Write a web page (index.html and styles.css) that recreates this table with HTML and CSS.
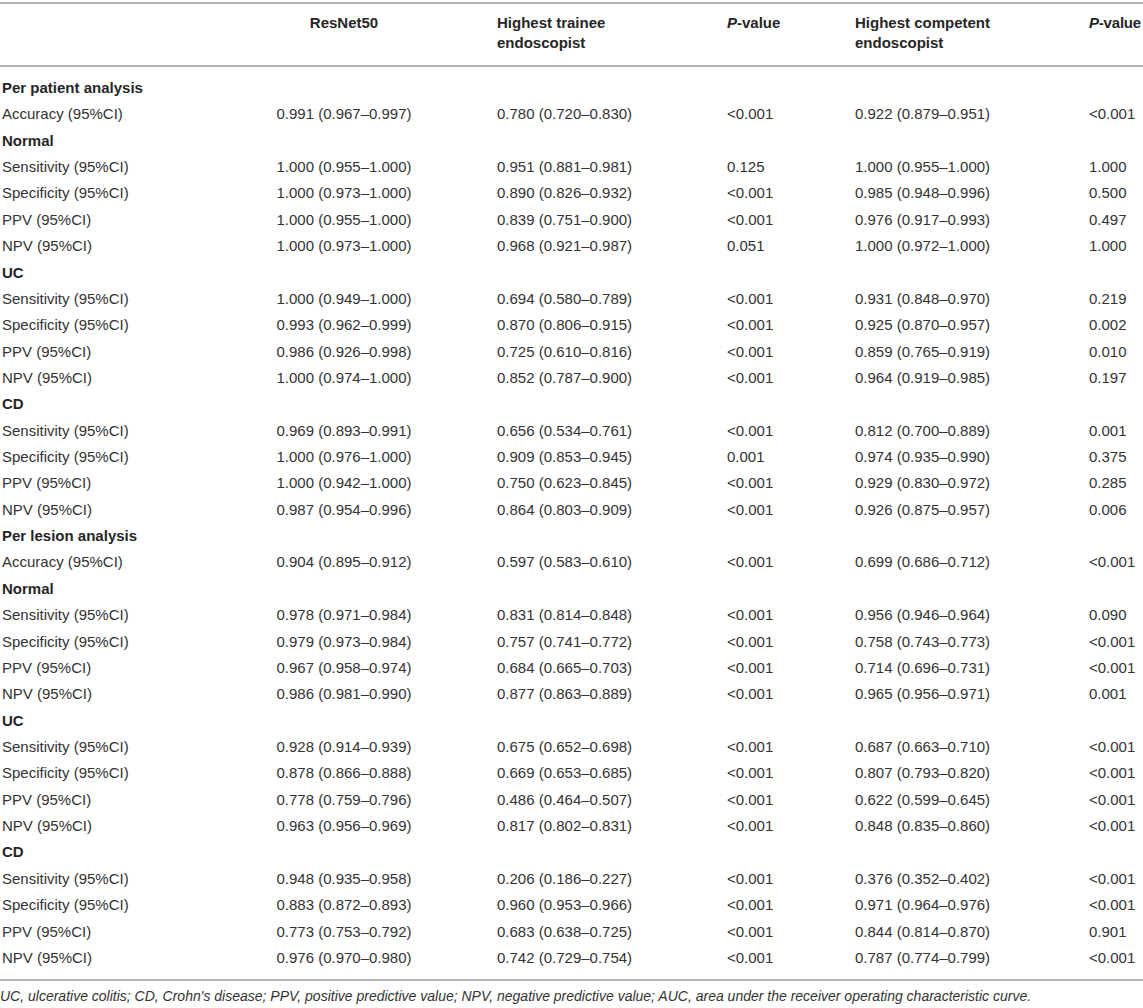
FILE: index.html
```html
<!DOCTYPE html>
<html>
<head>
<meta charset="utf-8">
<link rel="stylesheet" href="styles.css">
</head>
<body>
<div class="wrap">
<table class="tbl">
<colgroup>
<col class="c1"><col class="c2"><col class="c3"><col class="c4"><col class="c5"><col class="c6">
</colgroup>
<thead>
<tr>
<th></th>
<th class="ctr">ResNet50</th>
<th class="pl">Highest trainee<br>endoscopist</th>
<th><i>P</i>-value</th>
<th>Highest competent<br>endoscopist</th>
<th><i>P</i>-value</th>
</tr>
</thead>
<tbody>
<tr class="sec"><td>Per patient analysis</td><td></td><td></td><td></td><td></td><td></td></tr>
<tr><td>Accuracy (95%CI)</td><td class="ctr">0.991 (0.967–0.997)</td><td class="pl">0.780 (0.720–0.830)</td><td>&lt;0.001</td><td>0.922 (0.879–0.951)</td><td>&lt;0.001</td></tr>
<tr class="sec"><td>Normal</td><td></td><td></td><td></td><td></td><td></td></tr>
<tr><td>Sensitivity (95%CI)</td><td class="ctr">1.000 (0.955–1.000)</td><td class="pl">0.951 (0.881–0.981)</td><td>0.125</td><td>1.000 (0.955–1.000)</td><td>1.000</td></tr>
<tr><td>Specificity (95%CI)</td><td class="ctr">1.000 (0.973–1.000)</td><td class="pl">0.890 (0.826–0.932)</td><td>&lt;0.001</td><td>0.985 (0.948–0.996)</td><td>0.500</td></tr>
<tr><td>PPV (95%CI)</td><td class="ctr">1.000 (0.955–1.000)</td><td class="pl">0.839 (0.751–0.900)</td><td>&lt;0.001</td><td>0.976 (0.917–0.993)</td><td>0.497</td></tr>
<tr><td>NPV (95%CI)</td><td class="ctr">1.000 (0.973–1.000)</td><td class="pl">0.968 (0.921–0.987)</td><td>0.051</td><td>1.000 (0.972–1.000)</td><td>1.000</td></tr>
<tr class="sec"><td>UC</td><td></td><td></td><td></td><td></td><td></td></tr>
<tr><td>Sensitivity (95%CI)</td><td class="ctr">1.000 (0.949–1.000)</td><td class="pl">0.694 (0.580–0.789)</td><td>&lt;0.001</td><td>0.931 (0.848–0.970)</td><td>0.219</td></tr>
<tr><td>Specificity (95%CI)</td><td class="ctr">0.993 (0.962–0.999)</td><td class="pl">0.870 (0.806–0.915)</td><td>&lt;0.001</td><td>0.925 (0.870–0.957)</td><td>0.002</td></tr>
<tr><td>PPV (95%CI)</td><td class="ctr">0.986 (0.926–0.998)</td><td class="pl">0.725 (0.610–0.816)</td><td>&lt;0.001</td><td>0.859 (0.765–0.919)</td><td>0.010</td></tr>
<tr><td>NPV (95%CI)</td><td class="ctr">1.000 (0.974–1.000)</td><td class="pl">0.852 (0.787–0.900)</td><td>&lt;0.001</td><td>0.964 (0.919–0.985)</td><td>0.197</td></tr>
<tr class="sec"><td>CD</td><td></td><td></td><td></td><td></td><td></td></tr>
<tr><td>Sensitivity (95%CI)</td><td class="ctr">0.969 (0.893–0.991)</td><td class="pl">0.656 (0.534–0.761)</td><td>&lt;0.001</td><td>0.812 (0.700–0.889)</td><td>0.001</td></tr>
<tr><td>Specificity (95%CI)</td><td class="ctr">1.000 (0.976–1.000)</td><td class="pl">0.909 (0.853–0.945)</td><td>0.001</td><td>0.974 (0.935–0.990)</td><td>0.375</td></tr>
<tr><td>PPV (95%CI)</td><td class="ctr">1.000 (0.942–1.000)</td><td class="pl">0.750 (0.623–0.845)</td><td>&lt;0.001</td><td>0.929 (0.830–0.972)</td><td>0.285</td></tr>
<tr><td>NPV (95%CI)</td><td class="ctr">0.987 (0.954–0.996)</td><td class="pl">0.864 (0.803–0.909)</td><td>&lt;0.001</td><td>0.926 (0.875–0.957)</td><td>0.006</td></tr>
<tr class="sec"><td>Per lesion analysis</td><td></td><td></td><td></td><td></td><td></td></tr>
<tr><td>Accuracy (95%CI)</td><td class="ctr">0.904 (0.895–0.912)</td><td class="pl">0.597 (0.583–0.610)</td><td>&lt;0.001</td><td>0.699 (0.686–0.712)</td><td>&lt;0.001</td></tr>
<tr class="sec"><td>Normal</td><td></td><td></td><td></td><td></td><td></td></tr>
<tr><td>Sensitivity (95%CI)</td><td class="ctr">0.978 (0.971–0.984)</td><td class="pl">0.831 (0.814–0.848)</td><td>&lt;0.001</td><td>0.956 (0.946–0.964)</td><td>0.090</td></tr>
<tr><td>Specificity (95%CI)</td><td class="ctr">0.979 (0.973–0.984)</td><td class="pl">0.757 (0.741–0.772)</td><td>&lt;0.001</td><td>0.758 (0.743–0.773)</td><td>&lt;0.001</td></tr>
<tr><td>PPV (95%CI)</td><td class="ctr">0.967 (0.958–0.974)</td><td class="pl">0.684 (0.665–0.703)</td><td>&lt;0.001</td><td>0.714 (0.696–0.731)</td><td>&lt;0.001</td></tr>
<tr><td>NPV (95%CI)</td><td class="ctr">0.986 (0.981–0.990)</td><td class="pl">0.877 (0.863–0.889)</td><td>&lt;0.001</td><td>0.965 (0.956–0.971)</td><td>0.001</td></tr>
<tr class="sec"><td>UC</td><td></td><td></td><td></td><td></td><td></td></tr>
<tr><td>Sensitivity (95%CI)</td><td class="ctr">0.928 (0.914–0.939)</td><td class="pl">0.675 (0.652–0.698)</td><td>&lt;0.001</td><td>0.687 (0.663–0.710)</td><td>&lt;0.001</td></tr>
<tr><td>Specificity (95%CI)</td><td class="ctr">0.878 (0.866–0.888)</td><td class="pl">0.669 (0.653–0.685)</td><td>&lt;0.001</td><td>0.807 (0.793–0.820)</td><td>&lt;0.001</td></tr>
<tr><td>PPV (95%CI)</td><td class="ctr">0.778 (0.759–0.796)</td><td class="pl">0.486 (0.464–0.507)</td><td>&lt;0.001</td><td>0.622 (0.599–0.645)</td><td>&lt;0.001</td></tr>
<tr><td>NPV (95%CI)</td><td class="ctr">0.963 (0.956–0.969)</td><td class="pl">0.817 (0.802–0.831)</td><td>&lt;0.001</td><td>0.848 (0.835–0.860)</td><td>&lt;0.001</td></tr>
<tr class="sec"><td>CD</td><td></td><td></td><td></td><td></td><td></td></tr>
<tr><td>Sensitivity (95%CI)</td><td class="ctr">0.948 (0.935–0.958)</td><td class="pl">0.206 (0.186–0.227)</td><td>&lt;0.001</td><td>0.376 (0.352–0.402)</td><td>&lt;0.001</td></tr>
<tr><td>Specificity (95%CI)</td><td class="ctr">0.883 (0.872–0.893)</td><td class="pl">0.960 (0.953–0.966)</td><td>&lt;0.001</td><td>0.971 (0.964–0.976)</td><td>&lt;0.001</td></tr>
<tr><td>PPV (95%CI)</td><td class="ctr">0.773 (0.753–0.792)</td><td class="pl">0.683 (0.638–0.725)</td><td>&lt;0.001</td><td>0.844 (0.814–0.870)</td><td>0.901</td></tr>
<tr><td>NPV (95%CI)</td><td class="ctr">0.976 (0.970–0.980)</td><td class="pl">0.742 (0.729–0.754)</td><td>&lt;0.001</td><td>0.787 (0.774–0.799)</td><td>&lt;0.001</td></tr>
</tbody>
</table>
<p class="note">UC, ulcerative colitis; CD, Crohn's disease; PPV, positive predictive value; NPV, negative predictive value; AUC, area under the receiver operating characteristic curve.</p>
</div>
</body>
</html>
```
FILE: styles.css
```css
html, body {
  margin: 0;
  padding: 0;
  background: #ffffff;
}
body {
  font-family: "Liberation Sans", Arial, sans-serif;
  color: #333333;
}
.wrap {
  width: 1143px;
  padding-top: 2px;
}
.tbl {
  width: 1143px;
  table-layout: fixed;
  border-collapse: collapse;
  font-size: 15px;
}
.c1 { width: 250px; }
.c2 { width: 188px; }
.c3 { width: 289px; }
.c4 { width: 128px; }
.c5 { width: 234px; }
.c6 { width: 54px; }
.tbl thead th {
  border-top: 2px solid #b4b4b4;
  border-bottom: 2px solid #b4b4b4;
  padding: 9px 0 12px 0;
  line-height: 20px;
  text-align: left;
  vertical-align: top;
  font-weight: bold;
  color: #262626;
  white-space: nowrap;
}
.tbl thead th:last-child {
  letter-spacing: -0.2px;
}
.tbl td {
  padding: 4px 0;
  line-height: 18.36px;
  text-align: left;
  white-space: nowrap;
  vertical-align: middle;
}
.tbl td:first-child {
  padding-left: 2px;
}
.tbl .ctr { text-align: center; }
.tbl .pl { padding-left: 59px; }
.tbl tbody tr:first-child td { padding-top: 12px; }
.tbl tbody tr:last-child td {
  padding-bottom: 12px;
  border-bottom: 2px solid #b4b4b4;
}
.sec td {
  font-weight: bold;
  color: #262626;
}
.note {
  margin: 7px 0 0 0;
  font-size: 14px;
  line-height: 16px;
  font-style: italic;
  color: #333333;
}
```
